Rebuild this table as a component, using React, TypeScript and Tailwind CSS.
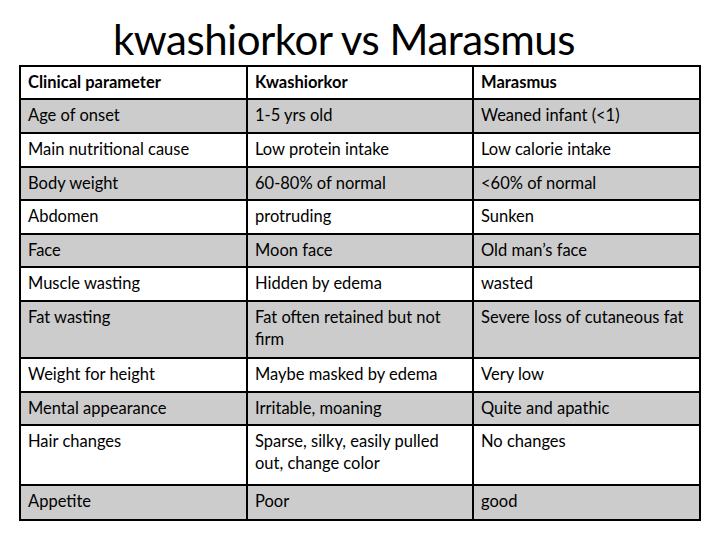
const rows: { cells: [string, string, string]; h: string; grey: boolean }[] = [
  { cells: ["Age of onset", "1-5 yrs old", "Weaned infant (<1)"], h: "h-[34px]", grey: true },
  { cells: ["Main nutritional cause", "Low protein intake", "Low calorie intake"], h: "h-[34px]", grey: false },
  { cells: ["Body weight", "60-80% of normal", "<60% of normal"], h: "h-[33px]", grey: true },
  { cells: ["Abdomen", "protruding", "Sunken"], h: "h-[34px]", grey: false },
  { cells: ["Face", "Moon face", "Old man\u2019s face"], h: "h-[33px]", grey: true },
  { cells: ["Muscle wasting", "Hidden by edema", "wasted"], h: "h-[34px]", grey: false },
  { cells: ["Fat wasting", "Fat often retained but not\nfirm", "Severe loss of cutaneous fat"], h: "h-[57px]", grey: true },
  { cells: ["Weight for height", "Maybe masked by edema", "Very low"], h: "h-[34px]", grey: false },
  { cells: ["Mental appearance", "Irritable, moaning", "Quite and apathic"], h: "h-[33px]", grey: true },
  { cells: ["Hair changes", "Sparse, silky, easily pulled\nout, change color", "No changes"], h: "h-[60px]", grey: false },
  { cells: ["Appetite", "Poor", "good"], h: "h-[33px]", grey: true },
];

function Cell({ text, last, bold }: { text: string; last?: boolean; bold?: boolean }) {
  return (
    <div
      className={`whitespace-pre pl-[7px] pt-[4px] text-[16.5px] leading-[22px] text-black ${
        last ? "" : "border-r-2 border-black"
      } ${bold ? "font-bold" : ""}`}
    >
      {text}
    </div>
  );
}

export default function App() {
  return (
    <div
      className="h-[540px] w-[720px] bg-white"
      style={{ fontFamily: "Lato, 'Open Sans', sans-serif" }}
    >
      {/* Title */}
      <div className="h-[65px] pl-[113px] pt-[17px]">
        <h1 className="text-[42px] leading-[44px] tracking-[-0.5px] text-black">kwashiorkor vs Marasmus</h1>
      </div>

      {/* Table */}
      <div className="ml-[19px] w-[682px] border-2 border-black">
        <div className="grid h-[33px] grid-cols-[227px_226px_225px] border-b-2 border-black bg-white">
          <Cell text="Clinical parameter" bold />
          <Cell text="Kwashiorkor" bold />
          <Cell text="Marasmus" bold last />
        </div>
        {rows.map((r, i) => (
          <div
            key={r.cells[0]}
            className={`grid grid-cols-[227px_226px_225px] ${r.h} ${
              i < rows.length - 1 ? "border-b-2 border-black" : ""
            } ${r.grey ? "bg-[#cccccc]" : "bg-white"}`}
          >
            <Cell text={r.cells[0]} />
            <Cell text={r.cells[1]} />
            <Cell text={r.cells[2]} last />
          </div>
        ))}
      </div>
    </div>
  );
}
